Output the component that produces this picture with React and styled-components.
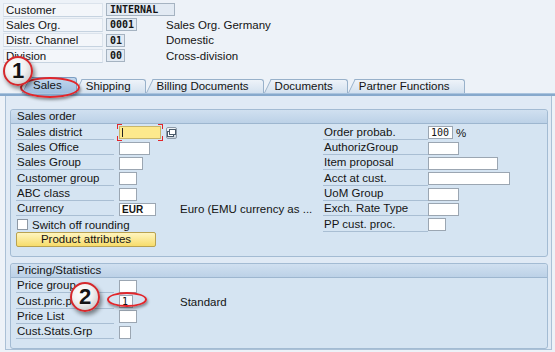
import React from 'react';
import styled, { createGlobalStyle } from 'styled-components';

const GlobalStyle = createGlobalStyle`
  html, body {
    margin: 0;
    padding: 0;
  }
  body {
    background: #edf2f8;
    font-family: "Liberation Sans", Arial, sans-serif;
    font-size: 11.5px;
    color: #141414;
  }
`;

const mono = `"DejaVu Sans Mono", "Liberation Mono", monospace`;

const Screen = styled.div`
  position: relative;
  width: 555px;
  height: 352px;
  overflow: hidden;
  background: #edf2f8;
  display: flex;
  flex-direction: column;
`;

const Header = styled.div`
  display: flex;
  flex-direction: column;
  padding: 2px 0 0 3px;
`;

const HeaderRow = styled.div`
  display: grid;
  grid-template-columns: 100px 57px auto;
  column-gap: 3px;
  align-items: center;
  height: 15.3px;
`;

const HeaderLabel = styled.div`
  box-sizing: border-box;
  height: 14px;
  line-height: 13px;
  padding-left: 2px;
  background: #f3f6fa;
  border: 1px solid #dbe3ec;
  border-bottom-color: #c6d3e0;
`;

const HeaderField = styled.div`
  box-sizing: border-box;
  width: ${(p) => p.$w}px;
  height: 13px;
  line-height: 11px;
  padding: 0 3px;
  background: #e2eaf3;
  border: 1px solid #a5b3c1;
  font-family: ${mono};
  font-size: 10px;
  font-weight: bold;
  white-space: nowrap;
`;

const HeaderText = styled.div`
  white-space: nowrap;
`;

const TabStrip = styled.div`
  display: flex;
  align-items: flex-end;
  height: 16px;
  margin-top: 14px;
  padding-left: 30px;
`;

const Tab = styled.div`
  position: relative;
  z-index: ${(p) => (p.$active ? 10 : 8 - p.$i)};
  box-sizing: border-box;
  height: ${(p) => (p.$active ? 16 : 14)}px;
  line-height: ${(p) => (p.$active ? 15 : 13)}px;
  margin-left: ${(p) => (p.$i === 0 ? 0 : p.$i === 1 ? 6 : 8)}px;
  padding: 0 14px 0 3px;
  white-space: nowrap;
  background: ${(p) =>
    p.$active
      ? 'linear-gradient(#c3d8ee, #9dbde0)'
      : 'linear-gradient(#eef3f9, #d3e1ef)'};
  border-top: 1px solid ${(p) => (p.$active ? '#7c9ec3' : '#98b1ca')};
  border-right: 1px solid ${(p) => (p.$active ? '#7c9ec3' : '#98b1ca')};
  border-top-right-radius: 3px;

  &::before {
    content: '';
    position: absolute;
    top: -1px;
    bottom: 0;
    left: -8px;
    width: 14px;
    background: inherit;
    border-top: 1px solid ${(p) => (p.$active ? '#7c9ec3' : '#98b1ca')};
    border-left: 1px solid ${(p) => (p.$active ? '#7c9ec3' : '#98b1ca')};
    transform: skewX(-26deg);
    transform-origin: bottom left;
    z-index: -1;
  }
`;

const TabLine = styled.div`
  height: 3px;
  background: #87a9cc;
  border-top: 1px solid #aac4de;
  box-sizing: border-box;
`;

const Panel = styled.div`
  flex: 1;
  display: flex;
  flex-direction: column;
  gap: 6px;
  margin: 0 3px 2px 5px;
  padding: 13px 3px 0 4px;
  background: #e0eaf5;
  border: 1px solid #aac0d6;
  border-top: 0;
`;

const Group = styled.div`
  background: #d5e4f2;
  border: 1px solid #a3bbd3;
  border-radius: 3px;
`;

const GroupTitle = styled.div`
  height: 13px;
  line-height: 13px;
  padding-left: 6px;
  background: linear-gradient(#d0e0f0, #bcd1e7);
  border-bottom: 1px solid #9db6cf;
  border-radius: 3px 3px 0 0;
`;

const GroupBody = styled.div`
  display: flex;
  padding: 1px 0 8px 5px;
`;

const Column = styled.div`
  display: flex;
  flex-direction: column;
  width: ${(p) => (p.$w ? `${p.$w}px` : 'auto')};
`;

const Row = styled.div`
  display: grid;
  grid-template-columns: ${(p) => p.$cols};
  column-gap: ${(p) => p.$gap}px;
  align-items: center;
  height: 15.3px;
`;

const Label = styled.div`
  box-sizing: border-box;
  height: 14px;
  line-height: 13px;
  padding-left: 1px;
  border-bottom: 1px solid #a9bed3;
  white-space: nowrap;
  overflow: hidden;
`;

const Field = styled.div`
  box-sizing: border-box;
  width: ${(p) => p.$w}px;
  height: 13px;
  line-height: 11px;
  padding: 0 2px;
  background: #fff;
  border: 1px solid #9ba6b2;
  font-family: ${(p) => (p.$sans ? '"Liberation Sans", Arial, sans-serif' : mono)};
  font-size: 10px;
  font-weight: ${(p) => (p.$sans ? 'bold' : 'normal')};
  white-space: nowrap;
`;

const Desc = styled.div`
  white-space: nowrap;
`;

const Inline = styled.div`
  display: flex;
  align-items: center;
  gap: 3px;
`;

const red = '#e2262b';
const corner = (pos, w, h) => `linear-gradient(${red}, ${red}) ${pos} / ${w}px ${h}px no-repeat`;

const FocusFrame = styled.div`
  display: flex;
  padding: 2px;
  margin: -2px 0 -2px -2px;
  background: ${[
    corner('left top', 5, 1),
    corner('left top', 1, 5),
    corner('right top', 5, 1),
    corner('right top', 1, 5),
    corner('left bottom', 5, 1),
    corner('left bottom', 1, 5),
    corner('right bottom', 5, 1),
    corner('right bottom', 1, 5),
  ].join(', ')};
`;

const FocusField = styled.div`
  box-sizing: border-box;
  width: 42px;
  height: 13px;
  padding: 1px 0 0 2px;
  background: #fde98d;
  border: 1px solid #c8b66a;
`;

const Caret = styled.div`
  width: 1px;
  height: 9px;
  background: #222;
`;

const F4Button = styled.div`
  box-sizing: border-box;
  width: 13px;
  height: 12px;
  display: flex;
  align-items: center;
  justify-content: center;
  background: linear-gradient(#f3f5f8, #c9d2dc);
  border: 1px solid #8d9aa8;
  border-radius: 2px;
`;

const CheckRow = styled.div`
  display: flex;
  align-items: center;
  gap: 4px;
  height: 15.3px;
  padding-left: 1px;
`;

const CheckBox = styled.div`
  box-sizing: border-box;
  width: 11px;
  height: 11px;
  background: #fff;
  border: 1px solid #8e99a5;
`;

const ButtonRow = styled.div`
  display: flex;
  align-items: center;
  height: 15.3px;
`;

const Button = styled.div`
  box-sizing: border-box;
  width: 140px;
  height: 15px;
  line-height: 13px;
  text-align: center;
  background: linear-gradient(#fff5bf, #f7dc6b);
  border: 1px solid #b9a250;
  border-radius: 2px;
`;

const Badge = styled.div`
  position: absolute;
  left: ${(p) => p.$x}px;
  top: ${(p) => p.$y}px;
  box-sizing: border-box;
  width: 30px;
  height: 30px;
  border-radius: 50%;
  border: 2px solid #d5282c;
  background: radial-gradient(circle at 40% 35%, #ffffff 0%, #f1f1f1 45%, #b9b9b9 100%);
  box-shadow: 2px 3px 4px rgba(0, 0, 0, 0.45);
  display: flex;
  align-items: center;
  justify-content: center;
  font-size: 22px;
  font-weight: bold;
  color: #141414;
  z-index: 20;
`;

const Ring = styled.div`
  position: absolute;
  left: ${(p) => p.$x}px;
  top: ${(p) => p.$y}px;
  width: ${(p) => p.$w}px;
  height: ${(p) => p.$h}px;
  box-sizing: border-box;
  border: 2px solid ${red};
  border-radius: 50%;
  box-shadow: 1px 2px 3px rgba(0, 0, 0, 0.4);
  z-index: 19;
`;

const tabs = ['Sales', 'Shipping', 'Billing Documents', 'Documents', 'Partner Functions'];

const LEFT = '98px 56px auto';
const RIGHT = '105px auto';

function CopyIcon() {
  return (
    <svg width="9" height="8" viewBox="0 0 9 8">
      <rect x="0.5" y="2.5" width="6" height="5" fill="#fff" stroke="#4a5a6a" />
      <rect x="2.5" y="0.5" width="6" height="5" fill="#fff" stroke="#4a5a6a" />
    </svg>
  );
}

export default function App() {
  return (
    <Screen>
      <GlobalStyle />
      <Header>
        <HeaderRow>
          <HeaderLabel>Customer</HeaderLabel>
          <HeaderField $w={69}>INTERNAL</HeaderField>
        </HeaderRow>
        <HeaderRow>
          <HeaderLabel>Sales Org.</HeaderLabel>
          <HeaderField $w={31}>0001</HeaderField>
          <HeaderText>Sales Org. Germany</HeaderText>
        </HeaderRow>
        <HeaderRow>
          <HeaderLabel>Distr. Channel</HeaderLabel>
          <HeaderField $w={19}>01</HeaderField>
          <HeaderText>Domestic</HeaderText>
        </HeaderRow>
        <HeaderRow>
          <HeaderLabel>Division</HeaderLabel>
          <HeaderField $w={19}>00</HeaderField>
          <HeaderText>Cross-division</HeaderText>
        </HeaderRow>
      </Header>

      <TabStrip>
        {tabs.map((t, i) => (
          <Tab key={t} $i={i} $active={i === 0}>
            {t}
          </Tab>
        ))}
      </TabStrip>
      <TabLine />

      <Panel>
        <Group>
          <GroupTitle>Sales order</GroupTitle>
          <GroupBody>
            <Column $w={307}>
              <Row $cols={LEFT} $gap={5}>
                <Label>Sales district</Label>
                <Inline>
                  <FocusFrame>
                    <FocusField>
                      <Caret />
                    </FocusField>
                  </FocusFrame>
                  <F4Button>
                    <CopyIcon />
                  </F4Button>
                </Inline>
              </Row>
              <Row $cols={LEFT} $gap={5}>
                <Label>Sales Office</Label>
                <Field $w={31} />
              </Row>
              <Row $cols={LEFT} $gap={5}>
                <Label>Sales Group</Label>
                <Field $w={24} />
              </Row>
              <Row $cols={LEFT} $gap={5}>
                <Label>Customer group</Label>
                <Field $w={18} />
              </Row>
              <Row $cols={LEFT} $gap={5}>
                <Label>ABC class</Label>
                <Field $w={18} />
              </Row>
              <Row $cols={LEFT} $gap={5}>
                <Label>Currency</Label>
                <Field $w={37} $sans>EUR</Field>
                <Desc>Euro (EMU currency as ...</Desc>
              </Row>
              <CheckRow>
                <CheckBox />
                Switch off rounding
              </CheckRow>
              <ButtonRow>
                <Button>Product attributes</Button>
              </ButtonRow>
            </Column>
            <Column>
              <Row $cols={RIGHT} $gap={0}>
                <Label>Order probab.</Label>
                <Inline>
                  <Field $w={25}>100</Field>%
                </Inline>
              </Row>
              <Row $cols={RIGHT} $gap={0}>
                <Label>AuthorizGroup</Label>
                <Field $w={31} />
              </Row>
              <Row $cols={RIGHT} $gap={0}>
                <Label>Item proposal</Label>
                <Field $w={70} />
              </Row>
              <Row $cols={RIGHT} $gap={0}>
                <Label>Acct at cust.</Label>
                <Field $w={82} />
              </Row>
              <Row $cols={RIGHT} $gap={0}>
                <Label>UoM Group</Label>
                <Field $w={31} />
              </Row>
              <Row $cols={RIGHT} $gap={0}>
                <Label>Exch. Rate Type</Label>
                <Field $w={31} />
              </Row>
              <Row $cols={RIGHT} $gap={0}>
                <Label>PP cust. proc.</Label>
                <Field $w={18} />
              </Row>
            </Column>
          </GroupBody>
        </Group>

        <Group>
          <GroupTitle>Pricing/Statistics</GroupTitle>
          <GroupBody>
            <Column $w={307}>
              <Row $cols={LEFT} $gap={5}>
                <Label>Price group</Label>
                <Field $w={18} />
              </Row>
              <Row $cols={LEFT} $gap={5}>
                <Label>Cust.pric.proc.</Label>
                <Field $w={14}>1</Field>
                <Desc>Standard</Desc>
              </Row>
              <Row $cols={LEFT} $gap={5}>
                <Label>Price List</Label>
                <Field $w={18} />
              </Row>
              <Row $cols={LEFT} $gap={5}>
                <Label>Cust.Stats.Grp</Label>
                <Field $w={12} />
              </Row>
            </Column>
          </GroupBody>
        </Group>
      </Panel>

      <Ring $x={20} $y={77} $w={60} $h={21} />
      <Badge $x={3} $y={56}>1</Badge>
      <Ring $x={107} $y={292} $w={40} $h={15} />
      <Badge $x={70} $y={282}>2</Badge>
    </Screen>
  );
}
